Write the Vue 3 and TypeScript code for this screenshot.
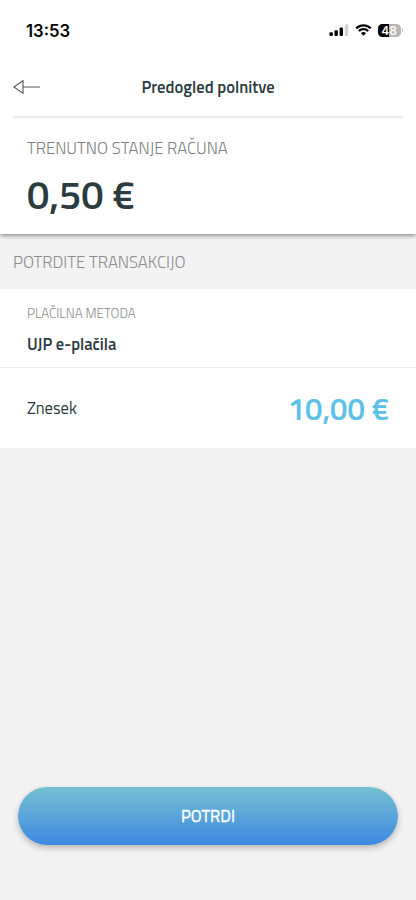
<script setup lang="ts">
interface Detail {
  label: string
  value: string
}

const time = '13:53'
const batteryLevel = 48
const balance = '0,50 €'
const payment: Detail = { label: 'PLAČILNA METODA', value: 'UJP e-plačila' }
const amount: Detail = { label: 'Znesek', value: '10,00 €' }
</script>

<template>
  <div class="screen">
    <header class="top">
      <div class="status">
        <span class="time">{{ time }}</span>
        <div class="indicators">
          <svg class="signal" width="20" height="12" viewBox="0 0 20 12">
            <rect x="0.5" y="8.2" width="3.4" height="3.8" rx="1.1" />
            <rect x="5.5" y="6.2" width="3.4" height="5.8" rx="1.1" />
            <rect x="10.6" y="3.4" width="3.4" height="8.6" rx="1.1" />
            <rect x="15.8" y="0.2" width="3.4" height="11.8" rx="1.1" fill="#d0d0d0" />
          </svg>
          <svg class="wifi" width="17" height="12" viewBox="0 0 17 12">
            <path d="M8.5 2.4c2.4 0 4.6.9 6.2 2.5.1.1.3.1.4 0l1.2-1.2c.2-.1.2-.4 0-.5C12 -.9 5-.9.7 3.2c-.2.1-.2.4 0 .5l1.2 1.2c.1.1.3.1.4 0C3.9 3.3 6.1 2.4 8.5 2.4Z" />
            <path d="M8.5 6.3c1.3 0 2.6.5 3.5 1.4.1.1.3.1.5 0l1.2-1.2c.1-.2.1-.4 0-.5-2.9-2.8-7.5-2.8-10.4 0-.1.1-.1.3 0 .5l1.2 1.2c.2.1.4.1.5 0 .9-.9 2.2-1.4 3.5-1.4Z" />
            <path d="M10.9 8.9c.1.1.1.3 0 .4l-2.2 2.2c-.1.1-.3.1-.4 0L6.1 9.3c-.1-.1-.1-.3 0-.4 1.4-1.2 3.4-1.2 4.8 0Z" />
          </svg>
          <div class="battery">
            <div class="cell">
              <div class="charge" :style="{ width: batteryLevel + '%' }"></div>
              <span class="level">{{ batteryLevel }}</span>
            </div>
            <div class="cap"></div>
          </div>
        </div>
      </div>

      <nav class="nav">
        <button class="back" aria-label="Nazaj">
          <svg width="28" height="16" viewBox="0 0 28 16">
            <path d="M10 1.8.8 8 10 14.2ZM10 8H27" fill="none" stroke="#505355" stroke-width="1.1" />
          </svg>
        </button>
        <h1 class="title">Predogled polnitve</h1>
      </nav>

      <section class="balance">
        <div class="balance-label">TRENUTNO STANJE RAČUNA</div>
        <div class="balance-value">{{ balance }}</div>
      </section>
    </header>

    <main class="content">
      <h2 class="section-title">POTRDITE TRANSAKCIJO</h2>
      <div class="card">
        <div class="method">
          <div class="method-label">{{ payment.label }}</div>
          <div class="method-value">{{ payment.value }}</div>
        </div>
        <div class="amount">
          <span class="amount-label">{{ amount.label }}</span>
          <span class="amount-value">{{ amount.value }}</span>
        </div>
      </div>
    </main>

    <footer class="footer">
      <button class="confirm">POTRDI</button>
    </footer>
  </div>
</template>

<style>
body {
  margin: 0;
  background: #f3f3f3;
}
</style>

<style scoped>
.screen {
  box-sizing: border-box;
  display: flex;
  flex-direction: column;
  width: 100%;
  height: 900px;
  background: #f3f3f3;
  color: #2b3b40;
  font-family: 'Titillium Web', Roboto, sans-serif;
  overflow: hidden;
}
.top {
  box-sizing: border-box;
  height: 234px;
  flex: none;
  background: #fff;
  box-shadow: 0 1px 5px rgba(0, 0, 0, 0.55);
}
.status {
  display: flex;
  align-items: center;
  justify-content: space-between;
  box-sizing: border-box;
  height: 60px;
  padding: 0 13px 0 26px;
}
.time {
  padding-top: 2px;
  color: #000;
  font: 600 16.7px/20px Inter, sans-serif;
}
.indicators {
  display: flex;
  align-items: center;
  gap: 6px;
}
.battery {
  display: flex;
  align-items: center;
  gap: 1px;
}
.cell {
  display: grid;
  width: 23px;
  height: 13px;
  border-radius: 4.5px;
  background: #b5b5b5;
  overflow: hidden;
}
.charge,
.level {
  grid-area: 1 / 1;
}
.charge {
  background: #000;
}
.level {
  padding-right: 1px;
  color: #fff;
  font: 600 12px/14px Inter, sans-serif;
  text-align: center;
}
.cap {
  width: 1px;
  height: 4px;
  border-radius: 0 2px 2px 0;
  background: #b5b5b5;
}
.nav {
  display: grid;
  grid-template-columns: 28px 1fr 28px;
  align-items: center;
  height: 56px;
  margin: 0 13px;
  border-bottom: 2px solid #ececec;
}
.back {
  display: flex;
  padding: 0 0 3px;
  border: 0;
  background: none;
}
.title {
  margin: 0;
  padding-bottom: 2px;
  font-size: 16.6px;
  font-weight: 600;
  line-height: 20px;
  text-align: center;
}
.balance {
  padding: 20px 27px 0;
}
.balance-label {
  color: #7d7f80;
  font-size: 16.65px;
  font-weight: 300;
  line-height: 20px;
}
.balance-value {
  margin-top: 12px;
  font-size: 39.8px;
  font-weight: 600;
  line-height: 48px;
}
.content {
  flex: 1;
}
.section-title {
  box-sizing: border-box;
  height: 55px;
  margin: 0;
  padding: 18px 13px 0;
  color: #8b8d8e;
  font-size: 16.7px;
  font-weight: 300;
  line-height: 20px;
}
.card {
  background: #fff;
}
.method {
  box-sizing: border-box;
  height: 79px;
  padding: 15px 27px 0;
  border-bottom: 1px solid #ececec;
}
.method-label {
  color: #8b8d8e;
  font-size: 13.3px;
  font-weight: 300;
  line-height: 18px;
}
.method-value {
  margin-top: 12px;
  font-size: 16.5px;
  font-weight: 600;
  line-height: 20px;
}
.amount {
  display: flex;
  align-items: center;
  justify-content: space-between;
  height: 80px;
  padding: 0 27px;
}
.amount-label {
  padding-bottom: 1px;
  font-size: 16.5px;
}
.amount-value {
  color: #5bc1e7;
  font-size: 31px;
  font-weight: 600;
}
.footer {
  padding: 0 18px 55px;
}
.confirm {
  display: block;
  width: 100%;
  height: 58px;
  padding: 0;
  border: 0;
  border-radius: 29px;
  background: linear-gradient(#76c0d3, #3d89e0);
  box-shadow: 0 3px 6px rgba(0, 0, 0, 0.25);
  color: #fff;
  font: 400 16.5px/20px 'Titillium Web', Roboto, sans-serif;
  -webkit-text-stroke: 0.35px #fff;
}
</style>
